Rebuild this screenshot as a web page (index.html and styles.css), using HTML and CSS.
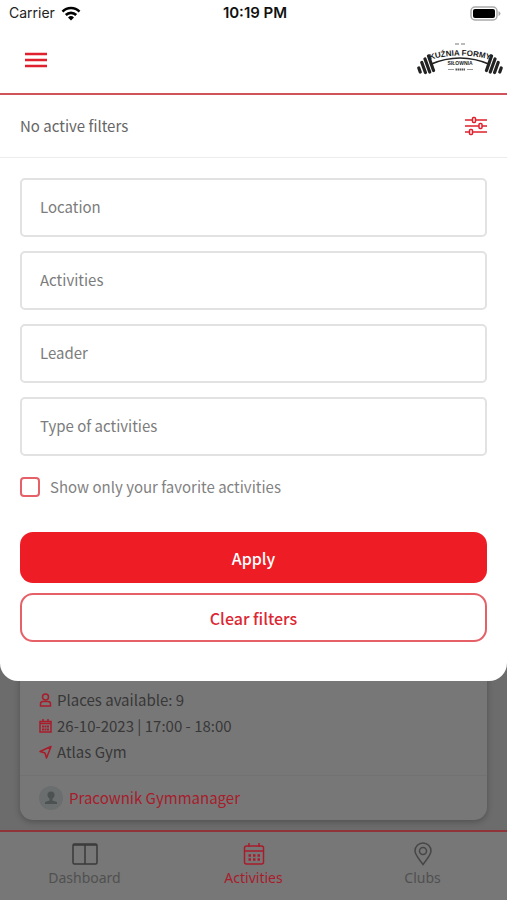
FILE: index.html
```html
<!DOCTYPE html>
<html lang="en">
<head>
    <meta charset="UTF-8">
    <meta name="viewport" content="width=device-width, initial-scale=1.0">
    <title>Activities</title>
    <link rel="stylesheet" href="styles.css">
</head>
<body>
    <div class="filter-sheet">
        <!-- Status bar -->
        <div class="status-bar">
            <div class="status-left">
                <span>Carrier</span>
                <svg width="20" height="15" viewBox="0 0 20 15" fill="none" stroke="#000" stroke-width="2.6">
                    <path d="M1.5 5.6a12 12 0 0 1 17 0M4.8 9a7.4 7.4 0 0 1 10.4 0"/>
                    <path d="M10 14.4l-3-3a4.3 4.3 0 0 1 6 0z" fill="#000" stroke="none"/>
                </svg>
            </div>
            <span class="status-time">10:19 PM</span>
            <div class="status-right">
                <svg width="31" height="15" viewBox="0 0 31 15">
                    <rect x="1" y="1" width="26" height="13" rx="4" fill="#fff" stroke="#aaa" stroke-width="1.5"/>
                    <rect x="3" y="3" width="22" height="9" rx="2" fill="#000"/>
                    <path d="M28.5 5v5q2-1 2-2.500t-2-2.500z" fill="#aaa"/>
                </svg>
            </div>
        </div>

        <!-- Header -->
        <header class="app-header">
            <button class="icon-btn" aria-label="Menu">
                <svg width="22" height="16" viewBox="0 0 22 16" stroke="#e0202c" stroke-width="2.4">
                    <path d="M0 2h22M0 8h22M0 14h22"/>
                </svg>
            </button>
            <svg class="brand" width="86" height="36" viewBox="0 0 86 36" role="img" aria-label="Kuźnia Formy">
                <path id="arch" d="M9 19Q43 8 77 19" fill="none"/>
                <path d="M13 22.500Q43 9.500 73 22.500" fill="none" stroke="#222" stroke-width="1.600"/>
                <text class="brand-name"><textPath href="#arch" startOffset="50%" text-anchor="middle">KUŹNIA FORMY</textPath></text>
                <path d="M38 2h4M44 2h4" stroke="#777" stroke-width="1"/>
                <text class="brand-sub" x="43" y="23" text-anchor="middle">SIŁOWNIA</text>
                <path d="M31 27.500h6M50 27.500h6" stroke="#999" stroke-width="1"/>
                <path d="M38.500 27.500h9.500" stroke="#555" stroke-width="2" stroke-dasharray="1.500 .5"/>
                <g fill="none" stroke="#222" stroke-width="3.200" stroke-linecap="round">
                    <path d="M11.500 14l5 14.500M8 17l4.700 13M4.800 20.500l3.600 10M1.800 26l1.400 4"/>
                    <path d="M74.500 14l-5 14.500M78 17l-4.700 13M81.200 20.500l-3.600 10M84.200 26l-1.400 4"/>
                </g>
            </svg>
        </header>

        <!-- Filters -->
        <div class="filter-bar">
            <span>No active filters</span>
            <button class="icon-btn" aria-label="Filters">
                <svg width="22" height="20" viewBox="0 0 22 20" fill="#fff" stroke="#e0202c" stroke-width="1.500">
                    <path d="M0 4h22M0 10h22M0 16h22"/>
                    <rect x="7.500" y="1.500" width="3" height="5" rx="1"/>
                    <rect x="14" y="7.500" width="3" height="5" rx="1"/>
                    <rect x="4.500" y="13.500" width="3" height="5" rx="1"/>
                </svg>
            </button>
        </div>

        <form class="filter-form">
            <input class="filter-input" type="text" placeholder="Location" aria-label="Location">
            <input class="filter-input" type="text" placeholder="Activities" aria-label="Activities">
            <input class="filter-input" type="text" placeholder="Leader" aria-label="Leader">
            <input class="filter-input" type="text" placeholder="Type of activities" aria-label="Type of activities">
            <label class="favorite">
                <input type="checkbox">
                <span>Show only your favorite activities</span>
            </label>
            <button class="btn btn-apply" type="button">Apply</button>
            <button class="btn btn-clear" type="reset">Clear filters</button>
        </form>
    </div>

    <!-- Dimmed list behind the sheet -->
    <main class="results">
        <article class="card">
            <ul class="card-info">
                <li>
                    <svg width="13" height="14" viewBox="0 0 13 14" fill="none" stroke="#a81c2b" stroke-width="1.500">
                        <circle cx="6.500" cy="4" r="3"/>
                        <path d="M1.500 13v-2q0-2.500 2.500-2.500h5q2.500 0 2.500 2.500v2z"/>
                    </svg>
                    <span>Places available: 9</span>
                </li>
                <li>
                    <svg width="13" height="14" viewBox="0 0 13 14" fill="none" stroke="#a81c2b" stroke-width="1.500">
                        <path d="M1 2.500h11v10.500h-11zM1 4.500h11M4 0v3M9 0v3"/>
                        <path d="M3 7.500h7M3 10.500h7" stroke-width="2" stroke-dasharray="2 .5"/>
                    </svg>
                    <span>26-10-2023 | 17:00 - 18:00</span>
                </li>
                <li>
                    <svg width="13" height="14" viewBox="0 0 13 14" fill="none" stroke="#a81c2b" stroke-width="1.500" stroke-linejoin="round">
                        <path d="M12 1.500L1 6.500l5 1.500 1.500 5z"/>
                    </svg>
                    <span>Atlas Gym</span>
                </li>
            </ul>
            <div class="card-leader">
                <svg width="24" height="24" viewBox="0 0 24 24">
                    <circle cx="12" cy="12" r="12" fill="#6b6e6e"/>
                    <circle cx="12" cy="9" r="3.500" fill="#4c5151"/>
                    <path d="M10.500 11h3v3.500l4.500 1.500v2H6v-2l4.500-1.500z" fill="#4c5151"/>
                </svg>
                <a href="#">Pracownik Gymmanager</a>
            </div>
        </article>
    </main>

    <nav class="tab-bar">
        <a class="tab" href="#">
            <svg width="26" height="24" viewBox="0 0 26 24" fill="none" stroke="#3a3a3a" stroke-width="1.500">
                <rect x="1" y="2" width="24" height="20" rx="1.500"/>
                <path d="M1 3h24M13 3v19"/>
            </svg>
            <span>Dashboard</span>
        </a>
        <a class="tab active" href="#">
            <svg width="26" height="24" viewBox="0 0 26 24" fill="none" stroke="#a81c2b" stroke-width="1.500">
                <rect x="3.500" y="4" width="19" height="18" rx="2"/>
                <path d="M3.500 9h19M8 1v4M18 1v4"/>
                <path d="M7.500 13.500h12M7.500 17.500h12" stroke-width="2.500" stroke-dasharray="2.500 2"/>
            </svg>
            <span>Activities</span>
        </a>
        <a class="tab" href="#">
            <svg width="26" height="24" viewBox="0 0 26 24" fill="none" stroke="#464646" stroke-width="1.500">
                <path d="M13 22.500C10 18 5 13 5 9a8 8 0 0 1 16 0c0 4-5 9-8 13.500z"/>
                <circle cx="13" cy="9" r="3.500"/>
            </svg>
            <span>Clubs</span>
        </a>
    </nav>
</body>
</html>
```
FILE: styles.css
```css
* {
    margin: 0;
    padding: 0;
    box-sizing: border-box;
}

body {
    font-family: "Noto Sans CJK SC", "Noto Sans", sans-serif;
    font-size: 15px;
    line-height: 24px;
    background: #6c6c6c;
    min-height: 100vh;
    display: flex;
    flex-direction: column;
}

svg {
    display: block;
    flex-shrink: 0;
}

button,
input {
    font: inherit;
}

a {
    color: inherit;
    text-decoration: none;
}

.filter-sheet {
    position: relative;
    z-index: 1;
    background: #fff;
    border-radius: 0 0 18px 18px;
    padding-bottom: 39px;
}

/* Status bar */
.status-bar {
    display: grid;
    grid-template-columns: 1fr auto 1fr;
    align-items: center;
    height: 26px;
    padding: 0 6px 0 9px;
    font-family: Inter, sans-serif;
    font-size: 14px;
    color: #222;
}

.status-left {
    display: flex;
    align-items: center;
    gap: 6px;
}

.status-time {
    font-size: 15px;
    font-weight: 600;
    color: #111;
}

.status-right {
    justify-self: end;
}

/* Header */
.app-header {
    display: flex;
    justify-content: space-between;
    align-items: center;
    height: 69px;
    padding: 0 4px 0 20px;
    border-bottom: 2px solid #d0525a;
}

.icon-btn {
    border: none;
    background: none;
    cursor: pointer;
}

.app-header .icon-btn {
    padding: 5px;
}

.brand-name {
    font-family: "Liberation Sans", sans-serif;
    font-size: 8px;
    font-weight: 700;
    fill: #1c1c1c;
}

.brand-sub {
    font-family: "Liberation Sans", sans-serif;
    font-size: 5px;
    font-weight: 700;
    fill: #1c1c1c;
}

/* Filters */
.filter-bar {
    display: flex;
    justify-content: space-between;
    align-items: center;
    height: 63px;
    padding: 0 20px;
    border-bottom: 1px solid #ececec;
    color: #666;
}

.filter-form {
    display: flex;
    flex-direction: column;
    padding: 20px 20px 0;
}

.filter-input {
    width: 100%;
    height: 59px;
    margin-bottom: 14px;
    padding: 0 18px 2px;
    border: 2px solid #e2e2e2;
    border-radius: 5px;
    background: #fff;
    color: #666;
    outline: none;
}

.filter-input::placeholder {
    color: #7c7c7c;
    opacity: 1;
}

.favorite {
    display: flex;
    align-items: center;
    gap: 10px;
    padding: 5px 0 33px;
    color: #828282;
}

.favorite input {
    appearance: none;
    width: 20px;
    height: 20px;
    border: 2px solid #e66068;
    border-radius: 4px;
}

.favorite input:checked {
    background: #ee1c25;
}

.btn {
    border-radius: 13px;
    font-size: 16px;
    font-weight: 500;
    cursor: pointer;
}

.btn-apply {
    height: 51px;
    margin-bottom: 10px;
    border: none;
    background: #ee1c25;
    color: #fff;
}

.btn-clear {
    height: 49px;
    border: 2px solid #e66068;
    background: #fff;
    color: #dc2833;
}

/* List */
.results {
    flex: 1;
    margin-top: -24px;
    padding: 0 20px 10px;
}

.card {
    padding: 30px 19px 10px;
    border-radius: 0 0 13px 13px;
    background: #777;
    color: #383838;
    box-shadow: 0 2px 6px rgba(0, 0, 0, 0.25);
}

.card-info {
    list-style: none;
}

.card-info li {
    display: flex;
    align-items: center;
    gap: 5px;
    height: 26px;
}

.card-leader {
    display: flex;
    align-items: center;
    gap: 6px;
    margin: 10px -19px 0;
    padding: 10px 19px 0;
    border-top: 1px solid #727272;
    color: #a81c2b;
}

/* Bottom navigation */
.tab-bar {
    display: flex;
    height: 70px;
    border-top: 2px solid #90343a;
    background: #777;
    font-family: "Noto Sans", sans-serif;
    font-size: 14px;
    color: #505050;
}

.tab {
    flex: 1;
    display: flex;
    flex-direction: column;
    align-items: center;
    padding-top: 10px;
}

.tab.active {
    color: #a81c2b;
}
```
